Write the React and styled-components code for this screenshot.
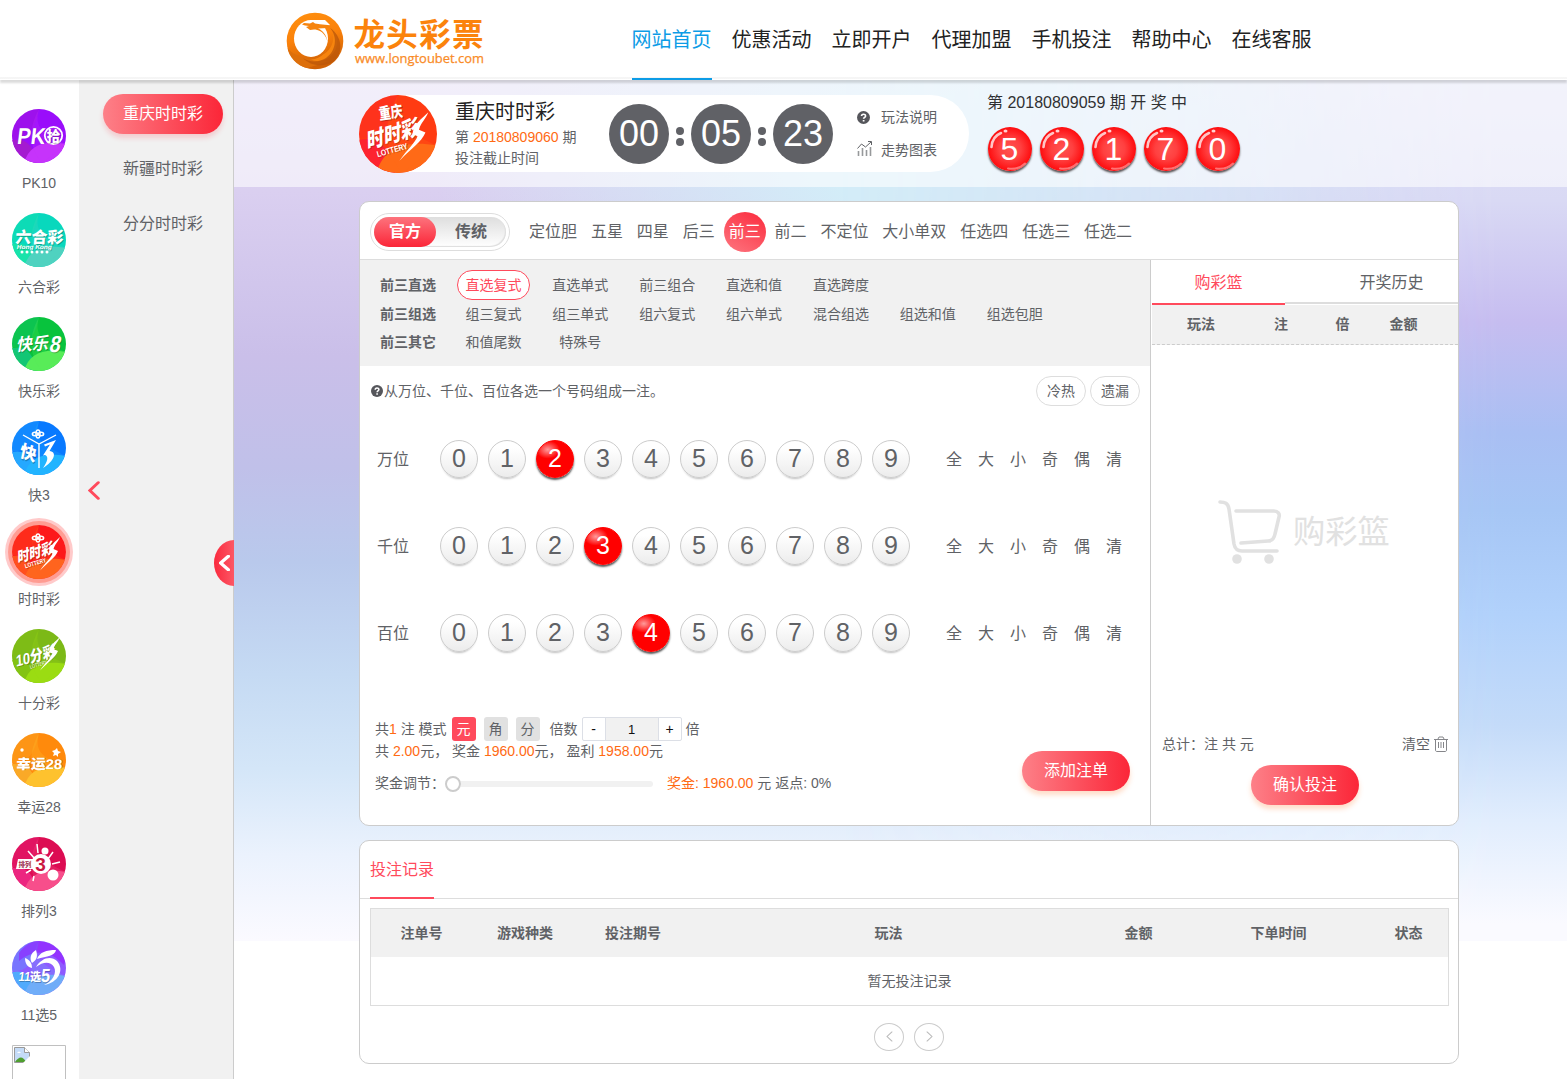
import React from "react";
import styled, { createGlobalStyle, css } from "styled-components";

const Global = createGlobalStyle`
  *, *::before, *::after { box-sizing: border-box; }
  html, body { margin: 0; padding: 0; }
  body {
    height: 1079px;
    overflow: hidden;
    background: #fff;
    color: #606266;
    font: 14px/20px "Liberation Sans", "Noto Sans CJK SC", sans-serif;
  }
  button, input { font: inherit; color: inherit; border: 0; padding: 0; background: none; }
  svg { display: block; flex: none; }
`;

const svgFont = '"Liberation Sans", "Noto Sans CJK SC", sans-serif';

/* ---------- header ---------- */
const Header = styled.header`
  position: relative;
  z-index: 5;
  height: 80px;
  padding-left: 286px;
  display: flex;
  background: linear-gradient(#fff 77px, #ececec 78px, #fff 79px);
  box-shadow: 0 3px 2px rgba(0, 0, 0, 0.14);
`;
const Nav = styled.nav`
  display: flex;
  gap: 20px;
  margin-left: 145.5px;
  height: 80px;
`;
const NavLink = styled.a`
  height: 80px;
  font-size: 20px;
  line-height: 81px;
  color: ${(p) => (p.$on ? "#0d9ce6" : "#222")};
  border-bottom: 2px solid ${(p) => (p.$on ? "#0d9ce6" : "transparent")};
`;

/* ---------- page frame ---------- */
const Frame = styled.div`
  display: flex;
  height: 999px;
  overflow: hidden;
`;
const Rail = styled.aside`
  width: 79px;
  flex: none;
  padding-top: 29px;
  display: flex;
  flex-direction: column;
  background: #fff;
`;
const RailItem = styled.div`
  width: 78px;
  height: 104px;
  flex: none;
  display: flex;
  flex-direction: column;
  align-items: center;
  gap: 10px;
`;
const RailIcon = styled.div`
  width: 54px;
  height: 54px;
  border-radius: 50%;
  ${(p) => p.$on && css`box-shadow: 0 0 0 4px #ff9c92, 0 0 0 7px #ffcaca;`}
`;
const SubMenu = styled.aside`
  position: relative;
  width: 155px;
  flex: none;
  padding: 14px 10px 0 24px;
  display: flex;
  flex-direction: column;
  gap: 15px;
  background: #f1f1f1;
  border-right: 1px solid #ccc;
`;
const SubItem = styled.a`
  width: 120px;
  height: 40px;
  border-radius: 20px;
  text-align: center;
  font-size: 16px;
  line-height: 39px;
  ${(p) =>
    p.$on &&
    css`
      color: #fff;
      background: linear-gradient(90deg, #fd8088, #fb2638);
      box-shadow: 0 4px 5px rgba(251, 60, 75, 0.2);
    `}
`;
const BackArrow = styled.div`
  position: absolute;
  left: 9px;
  top: 401px;
`;
const FoldTab = styled.div`
  position: absolute;
  right: -1px;
  top: 460px;
  width: 20px;
  height: 46px;
  border-radius: 20px 0 0 20px / 23px 0 0 23px;
  background: linear-gradient(90deg, #fa2a3e, #fc5765);
  display: flex;
  align-items: center;
  justify-content: flex-end;
  padding-right: 4px;
`;

const Main = styled.main`
  position: relative;
  isolation: isolate;
  width: 1333px;
  height: 999px;
  &::before, &::after {
    content: "";
    position: absolute;
    z-index: -1;
    left: 0;
    right: 0;
    top: 0;
    height: 861px;
  }
  &::before {
    background:
      radial-gradient(ellipse 620px 240px at 820px 90px, #d3edf8 0 35%, rgba(211, 237, 248, 0)),
      linear-gradient(180deg, #dfd8f3 0, #dacff0 13%, #cabfe9 32%, #c0c0e9 45%, #b9c9ec 56%, #c5daf3 69%, #d4e6f8 80%, #ebf2fd 90%, #fbfaff 100%);
  }
  &::after {
    background: linear-gradient(180deg, #e1e2f6 0, #d9d9f4 14%, #c6bdf0 28%, #a9bff3 41%, #a6c6f5 50%, #b1d1fb 62%, #c4dbf9 75%, #e1edfd 86%, #fafaff 98%);
    mask-image: linear-gradient(90deg, transparent 45%, #000 95%);
  }
`;
const InfoBar = styled.section`
  height: 107px;
  padding: 15px 0 0 125px;
  display: flex;
  background: rgba(255, 255, 255, 0.58);
`;
const InfoPill = styled.div`
  width: 610px;
  height: 77px;
  border-radius: 39px;
  background: #fff;
  display: flex;
`;
const GameText = styled.div`
  margin-left: 18px;
  width: 154px;
  padding-top: 3px;
`;
const GameName = styled.div`
  margin-bottom: 1px;
  font-size: 20px;
  line-height: 28px;
  color: #222;
`;
const Line = styled.div`
  line-height: 21px;
  white-space: pre;
`;
const Orange = styled.span`
  color: #ff6a13;
`;
const Clock = styled.div`
  display: flex;
  align-items: center;
  height: 78px;
`;
const Digits = styled.div`
  width: 60px;
  height: 60px;
  border-radius: 50%;
  background: #606166;
  color: #fff;
  font-size: 36px;
  line-height: 60px;
  text-align: center;
`;
const Colon = styled.div`
  width: 22px;
  display: flex;
  flex-direction: column;
  align-items: center;
  gap: 3px;
  padding-top: 5px;
  &::before, &::after {
    content: "";
    width: 8px;
    height: 8px;
    border-radius: 50%;
    background: #606166;
  }
`;
const Links = styled.div`
  margin-left: 24px;
  padding-top: 11px;
  display: flex;
  flex-direction: column;
  gap: 11px;
`;
const IconLink = styled.a`
  height: 22px;
  display: flex;
  align-items: center;
  gap: 8px;
`;
const LinkIcon = styled.span`
  width: 16px;
  height: ${(p) => p.$h}px;
`;
const Draw = styled.div`
  margin: -3px 0 0 18px;
`;
const DrawTitle = styled.div`
  font-size: 16px;
  line-height: 22px;
  color: #303133;
`;
const DrawBalls = styled.div`
  display: flex;
  gap: 8px;
  margin: 13px 0 0 1px;
`;
const DrawBall = styled.div`
  position: relative;
  width: 44px;
  height: 44px;
  border-radius: 50%;
  color: #fff;
  font-size: 32px;
  line-height: 44px;
  text-align: center;
  text-indent: -1px;
  background: radial-gradient(circle, #ff5350 0, #ff4040 35%, #fe0d0f 70%);
  box-shadow: 0 2px 2px rgba(40, 30, 30, 0.75);
`;
const Gloss = styled.svg`
  position: absolute;
  inset: 0;
`;

/* ---------- cards ---------- */
const Card = styled.section`
  width: 1100px;
  height: ${(p) => p.$h}px;
  margin: 14px 0 0 125px;
  border: 1px solid #ccc;
  border-radius: 10px;
  background: #fff;
  overflow: hidden;
`;
const TopRow = styled.div`
  height: 58px;
  display: flex;
  align-items: center;
  padding: 2px 0 0 10px;
  border-bottom: 1px solid #ddd;
`;
const Switch = styled.div`
  width: 140px;
  height: 38px;
  padding: 3px;
  border: 1px solid #ddd;
  border-radius: 19px;
`;
const SwitchTrack = styled.div`
  display: flex;
  height: 30px;
  border-radius: 15px;
  background: linear-gradient(#dedede, #fff);
  box-shadow: inset -1px -1px 1px #ddd;
`;
const SwitchOption = styled.button`
  width: ${(p) => (p.$on ? 62 : 70)}px;
  height: 30px;
  border-radius: 15px;
  font-size: 16px;
  font-weight: 700;
  line-height: 28px;
  ${(p) => p.$on && css`color: #fff; background: linear-gradient(#fd737d, #fb2638);`}
`;
const PlayTabs = styled.div`
  display: flex;
  align-items: center;
  gap: 3.9px;
  margin-left: 14px;
`;
const PlayTab = styled.a`
  height: 40px;
  padding: 0 5px;
  font-size: 16px;
  line-height: 39px;
  ${(p) => p.$on && css`color: #fff; border-radius: 50%; background: linear-gradient(30deg, #fd7680, #fb2a3c);`}
`;
const Columns = styled.div`
  display: flex;
  height: 566px;
`;
const BetArea = styled.div`
  width: 791px;
  border-right: 1px solid #ccc;
`;
const Methods = styled.div`
  height: 106px;
  padding: 10px 0 0 20px;
  background: #f1f1f1;
`;
const MethodRow = styled.div`
  display: flex;
  align-items: center;
  height: ${(p) => (p.$first ? 30 : 28)}px;
  gap: 13.9px;
`;
const MethodLabel = styled.b`
  width: 63px;
`;
const Method = styled.a`
  width: 73px;
  height: ${(p) => (p.$on ? 30 : 28)}px;
  line-height: 28px;
  text-align: center;
  ${(p) => p.$on && css`color: #ff4a5c; background: #fff; border: 1px solid #ff4a5c; border-radius: 15px;`}
`;
const HintRow = styled.div`
  display: flex;
  align-items: center;
  height: 50px;
  padding: 0 10px 0 11px;
`;
const HintText = styled.span`
  margin: 0 auto 0 1px;
`;
const RoundButton = styled.button`
  width: 50px;
  height: 30px;
  margin-left: 4px;
  border: 1px solid #ddd;
  border-radius: 15px;
  line-height: 28px;
`;
const NumberRow = styled.div`
  display: flex;
  align-items: center;
  height: 87px;
  padding-left: 17px;
  font-size: 16px;
`;
const RowLabel = styled.span`
  width: 63px;
`;
const Balls = styled.div`
  display: flex;
  gap: 10px;
  padding-bottom: 2px;
`;
const Ball = styled.button`
  width: 38px;
  height: 38px;
  padding-bottom: 2px;
  border-radius: 50%;
  border: 1px solid #ccc;
  background: linear-gradient(#fff 20%, #ececec);
  box-shadow: 0 3px 2px -2px rgba(0, 0, 0, 0.25);
  font-size: 25px;
  line-height: 34px;
  ${(p) =>
    p.$on &&
    css`
      color: #fff;
      border-color: #f00;
      background: radial-gradient(ellipse 12px 9px at 30% 24%, #ff9b9b, #f00);
      box-shadow: 0 2px 2px rgba(0, 0, 0, 0.65);
    `}
`;
const Picks = styled.div`
  display: flex;
  gap: 16px;
  margin-left: 36px;
`;
const BetFooter = styled.div`
  display: flex;
  justify-content: space-between;
  align-items: flex-start;
  padding: 40px 20px 0 15px;
`;
const AddSlot = styled.div`
  padding-top: 34px;
`;
const ModeRow = styled.div`
  display: flex;
  align-items: center;
  height: 24px;
  white-space: pre;
`;
const Units = styled.div`
  display: flex;
  gap: 8px;
  margin: 0 10px 0 5px;
`;
const Unit = styled.button`
  width: 24px;
  height: 24px;
  border-radius: 3px;
  line-height: 24px;
  background: ${(p) => (p.$on ? "#ff4a5c" : "#e1e1e1")};
  color: ${(p) => (p.$on ? "#fff" : "#606266")};
`;
const Stepper = styled.div`
  display: flex;
  width: 100px;
  height: 24px;
  margin: 0 4px;
  border: 1px solid #dcdfe6;
  border-radius: 2px;
  color: #111;
  line-height: 22px;
  text-align: center;
`;
const StepButton = styled.button`
  width: 22px;
  color: #111;
`;
const StepValue = styled.div`
  width: 54px;
  font-size: 13px;
  line-height: 24px;
  background: #f1f1f1;
  border: 1px solid #dcdfe6;
  border-width: 0 1px;
`;
const SliderRow = styled.div`
  display: flex;
  align-items: center;
  margin-top: 11px;
  height: 20px;
  white-space: pre;
`;
const Track = styled.div`
  width: 208px;
  height: 18px;
  margin: 1px 14px 0 0;
  display: flex;
  align-items: center;
  &::before {
    content: "";
    width: 16px;
    height: 16px;
    flex: none;
    border: 2px solid #ccc;
    border-radius: 50%;
  }
  &::after {
    content: "";
    flex: 1;
    height: 6px;
    border-radius: 0 3px 3px 0;
    background: #f1f1f1;
  }
`;
const RedButton = styled.button`
  width: 108px;
  height: 40px;
  border-radius: 20px;
  color: #fff;
  font-size: 16px;
  line-height: 38px;
  background: linear-gradient(90deg, #fd8088, #fb2638);
  box-shadow: 0 4px 5px rgba(255, 120, 40, 0.25);
`;

/* ---------- basket ---------- */
const Basket = styled.div`
  width: 307px;
  display: flex;
  flex-direction: column;
  padding-left: 1px;
`;
const BasketTabs = styled.div`
  display: flex;
  height: 45px;
  font-size: 16px;
  line-height: 45px;
  text-align: center;
`;
const BasketTab = styled.a`
  width: ${(p) => (p.$on ? 133 : 173)}px;
  height: 45px;
  ${(p) => !p.$on && css`padding-left: 40px; height: 44px; border-bottom: 2px solid #ddd;`}
  ${(p) => p.$on && css`color: #ff4a5c; border-bottom: 2px solid #ff4a5c;`}
`;
const BasketHead = styled.div`
  display: grid;
  grid-template-columns: 98px 62px 61px 61px;
  height: 40px;
  background: #f1f1f1;
  border-bottom: 1px dashed #ccc;
  font-weight: 700;
  line-height: 39px;
  text-align: center;
`;
const EmptyBasket = styled.div`
  height: 390px;
  display: flex;
  align-items: center;
  gap: 11px;
  padding: 0 0 17px 66px;
  color: #e1e1e1;
  font-size: 32.3px;
  line-height: 40px;
`;
const TotalRow = styled.div`
  display: flex;
  align-items: center;
  height: 18px;
  padding: 0 10px;
`;
const ClearButton = styled.button`
  display: flex;
  align-items: center;
  gap: 4px;
  margin-left: auto;
`;
const ConfirmRow = styled.div`
  display: flex;
  justify-content: center;
  padding-top: 12px;
`;

/* ---------- records ---------- */
const RecordTitle = styled.div`
  height: 58px;
  padding-left: 10px;
  display: flex;
  border-bottom: 1px solid #ddd;
`;
const RecordTab = styled.a`
  height: 58px;
  font-size: 16px;
  line-height: 57px;
  color: #ff4a5c;
  border-bottom: 2px solid #ff4a5c;
`;
const Table = styled.div`
  width: 1079px;
  height: 98px;
  margin: 9px 0 0 10px;
  border: 1px solid #ddd;
`;
const TableHead = styled.div`
  display: grid;
  grid-template-columns: 101px 106px 110px 401px 99px 181px 79px;
  height: 48px;
  background: #f1f1f1;
  font-weight: 700;
  line-height: 48px;
  text-align: center;
`;
const TableEmpty = styled.div`
  line-height: 48px;
  text-align: center;
`;
const Pager = styled.div`
  display: flex;
  justify-content: center;
  gap: 10px;
  padding-top: 17px;
`;
const PageButton = styled.button`
  width: 30px;
  height: 28px;
  padding-bottom: 2px;
  border: 1px solid #ccc;
  border-radius: 50%;
  display: grid;
  place-items: center;
`;

/* ---------- drawings ---------- */
function Logo() {
  return (
    <svg width="200" height="78" viewBox="0 0 200 78">
      <defs>
        <linearGradient id="ring" x1="0" y1="0" x2="0.25" y2="1">
          <stop offset="0" stopColor="#ff900f" />
          <stop offset="0.5" stopColor="#fb820b" />
          <stop offset="1" stopColor="#cf6106" />
        </linearGradient>
      </defs>
      <circle cx="29" cy="41" r="28.3" fill="url(#ring)" />
      <path d="M1.500 48c1 8 9 18 20 20l22-7-18-2C14 58 5 53 1.500 48Z" fill="#dd6f0b" />
      <ellipse cx="25" cy="38.500" rx="17" ry="18.500" fill="#fff" />
      <path d="M24 20h15l5 5-6 4-14-3Z" fill="#fff" />
      <path d="M16 24.500l2-1.500 6 .5 3-1.500 2 1.500 5 .8 10 1-2 2.700-10 .5c10 4 13 18 5 26 10-5 14-19 6-29l5 4c5 9 4 20-3 26-6 6-14 7-20 4 13-1 20-12 15-22-3-6-8-8-12-8l-4 .5-4-3 3-1-4-.5Z" fill="#f6840e" />
      <path d="M44 28c8 9 6 23-4 30-8 5-17 4-23 0 7 8 22 10 31 3 10-9 8-25-4-33Z" fill="#b9560a" opacity=".75" />
      <text x="67.5" y="46" fontSize="31.500" fontWeight="700" textLength="130" fill="#fb830c" fontFamily={svgFont}>龙头彩票</text>
      <text x="69" y="63" fontSize="13" textLength="129" lengthAdjust="spacingAndGlyphs" fill="#f98b27" stroke="#f98b27" strokeWidth=".25" fontFamily='"Open Sans", sans-serif'>www.longtoubet.com</text>
    </svg>
  );
}

function Word({ children, x = 27, y = 33, size = 16, angle = 0, skew = 0, width, fill = "#fff", weight = 900 }) {
  return (
    <text
      transform={`translate(${x} ${y}) rotate(${angle}) skewX(${skew})`}
      fontSize={size}
      fontWeight={weight}
      fill={fill}
      textAnchor="middle"
      textLength={width}
      lengthAdjust="spacingAndGlyphs"
      fontFamily={svgFont}
      style={{ textShadow: fill === "#fff" ? "1px 1px 0 rgba(0,0,0,.25)" : "none" }}
    >
      {children}
    </text>
  );
}

function Disc({ id, colors, size = 54, children }) {
  const [a, b, c] = colors;
  return (
    <svg width={size} height={size} viewBox="0 0 54 54">
      <defs>
        <clipPath id={`${id}-clip`}><circle cx="27" cy="27" r="27" /></clipPath>
      </defs>
      <g clipPath={`url(#${id}-clip)`}>
        <rect width="54" height="54" fill={a} />
        <path d="M0 30C12 31 22 25 27 0H0Z" fill={b} opacity=".35" />
        <path d="M0 31c14-3 21 5 25 23H0Z" fill={b} />
        <path d="M12 54c5-17 18-23 42-19v19Z" fill={c} />
        <path d="M27 0c-5 19 3 24 27 35L30 54C18 39 15 22 27 0Z" fill={c} opacity=".25" />
      </g>
      {children}
    </svg>
  );
}

function Flower() {
  return (
    <g fill="none" stroke="#fff" strokeWidth="1.6">
      <ellipse cx="26" cy="13" rx="2" ry="4" />
      <ellipse cx="23" cy="13" rx="2.600" ry="1.700" />
      <ellipse cx="29" cy="13" rx="2.600" ry="1.700" />
    </g>
  );
}

const Swoosh = () => (
  <path d="M48 12C46 17 43 19 41.500 24L46 26C43 33 37 36 28 45.500 33 38 39 33 40.500 28.500L37 27C38 20 43 17 48 12Z" fill="#fff" />
);

const games = [
  { name: "PK10", art: (
    <Disc id="pk" colors={["#9a0dfb", "#a41bd0", "#c633fb"]}>
      <Word x={18.5} y={34.5} size={23} width={28} skew={-7}>PK</Word>
      <circle cx="41.5" cy="26.5" r="8.7" fill="#a51af3" stroke="#fff" strokeWidth="1.8" />
      <Word x={41.5} y={31.6} size={13.5}>拾</Word>
    </Disc>
  ) },
  { name: "六合彩", art: (
    <Disc id="lh" colors={["#08d8bd", "#18e3aa", "#4fd2c0"]}>
      <Word x={27} y={30} size={16} width={48} skew={-4}>六合彩</Word>
      <Word x={22} y={36} size={6} width={35} skew={-10}>Hong Kong</Word>
      <path d="M10 39h27" stroke="#fff" strokeWidth="3" strokeLinecap="round" strokeDasharray="0 5" />
    </Disc>
  ) },
  { name: "快乐彩", art: (
    <Disc id="kl" colors={["#08c33d", "#13c675", "#58ec59"]}>
      <Word x={20} y={33} size={17} width={32} angle={-3} skew={-14} weight={700}>快乐</Word>
      <Word x={42} y={35} size={23} width={11} skew={-12} weight={700}>8</Word>
    </Disc>
  ) },
  { name: "快3", art: (
    <Disc id="k3" colors={["#0879ff", "#25a8ff", "#22b4ff"]}>
      <Flower />
      <path d="M11 14l16 9 17-9M27 23v24" stroke="#fff" strokeWidth="1.4" fill="none" />
      <Word x={15} y={38} size={17} angle={20} skew={8}>快</Word>
      <path d="M32 23.500l12-4.500-6.500 11c8 1 5 10-6.500 17 4.500-6.500 6-11.500 2-13l-2 .5 7-11-5 2Z" fill="#fff" />
    </Disc>
  ) },
  { name: "时时彩", on: true, art: (
    <Disc id="ss" colors={["#fd181b", "#ff501d", "#ff651e"]}>
      <Flower />
      <Word x={23.5} y={33} size={15} width={37} angle={-16} skew={-15}>时时彩</Word>
      <Word x={24} y={40} size={6} width={22} angle={-17}>LOTTERY</Word>
      <Swoosh />
    </Disc>
  ) },
  { name: "十分彩", art: (
    <Disc id="sf" colors={["#7cb917", "#83c313", "#9bdc12"]}>
      <Word x={24} y={32.5} size={15.5} width={41} angle={-15} skew={-12}>10分彩</Word>
      <Word x={27} y={37} size={5} width={18} angle={-17} weight={400}>LOTTERY</Word>
      <g transform="translate(0 -4)"><Swoosh /></g>
    </Disc>
  ) },
  { name: "幸运28", art: (
    <Disc id="xy" colors={["#ff8a0c", "#faa927", "#fec22e"]}>
      <Word x={27} y={35.5} size={14} width={46} skew={-3}>幸运28</Word>
      <path d="M45 15l1 3 3 1-3 2v3l-2-2-3 1 1-3-2-2 3-1Z" fill="#fff" />
      <circle cx="10" cy="17" r="1.7" fill="#fff" />
    </Disc>
  ) },
  { name: "排列3", art: (
    <Disc id="pl" colors={["#dc0c52", "#ec2680", "#f74e8b"]}>
      <path d="M25 7l1 9M16 14l7 8M41 15l-5 7M48 25l-8 2M22 39l-1 5M14 36l5-3" stroke="#fff" strokeWidth="1.5" />
      <path d="M6 22h17l-1 10H4Z" fill="#fff" />
      <Word x={13} y={29.6} size={7} width={13} fill="#9a2949" weight={700}>排列</Word>
      <circle cx="29" cy="27" r="10" fill="#fff" />
      <circle cx="33" cy="14" r="3.5" fill="#fff" />
      <circle cx="41" cy="38" r="5.5" fill="#fff" />
      <Word x={28.5} y={33.7} size={19} fill="#ca1741">3</Word>
    </Disc>
  ) },
  { name: "11选5", art: (
    <Disc id="x5" colors={["#8e5aff", "#51aafc", "#70adf8"]}>
      <path d="M7 12C16 0 24 0 27 0 44 2 50 12 53 20l-1 4C37 8 22 8 7 20Z" fill="#970cff" opacity=".5" />
      <path d="M24 26c5-9 15-12 21-6 8 9 1 22-13 24 9-4 13-12 10-18-4-6-11-5-18 0Z" fill="#fff" />
      <path d="M25 18c3-7 9-9 19-9-1 6-9 6-19 9ZM20 22c-3-5-1-10 4-13 2 6 1 10-4 13ZM20 27c-5-1-7-5-7-10 5 2 7 5 7 10Z" fill="#fff" />
      <Word x={12} y={40} size={13} width={12} skew={-8}>11</Word>
      <Word x={23.5} y={40} size={11}>选</Word>
      <Word x={33} y={41} size={19} width={9} skew={-6}>5</Word>
    </Disc>
  ) },
];

function BrokenImage() {
  return (
    <svg width="54" height="54" viewBox="0 0 54 54">
      <path d="M.5 54V.5h53V54" fill="#fff" stroke="#c0c0c0" />
      <path d="M2.5 2.5h10l5 5v10h-15Z" fill="#c4dbf7" stroke="#999" />
      <path d="M12.5 2.5v5h5" fill="#fff" stroke="#999" />
      <path d="M3 17c4-6 8-6 11 0Z" fill="#4f9f2f" />
      <path d="M5 8q2-3 4 0Z" fill="#fff" />
      <path d="M11 18l7-7v7Z" fill="#fff" />
    </svg>
  );
}

function CityLogo() {
  return (
    <Disc id="cq" size={78} colors={["#ff3b12", "#fd2330", "#ff6a17"]}>
      <Word x={22.5} y={16} size={11} angle={-8} width={16.5}>重庆</Word>
      <Word x={23.5} y={32.5} size={15} width={37} angle={-16} skew={-15}>时时彩</Word>
      <Word x={23.5} y={40} size={5.8} width={22} angle={-16}>LOTTERY</Word>
      <Swoosh />
    </Disc>
  );
}

const Help = ({ size = 12 }) => (
  <svg width={size} height={size} viewBox="0 0 12 12">
    <circle cx="6" cy="6" r="6" fill="#55565b" />
    <path d="M4.2 4.7C4.2 2.4 7.9 2.4 7.9 4.5c0 1.4-1.8 1.4-1.8 2.7" fill="none" stroke="#fff" strokeWidth="1.5" />
    <path d="M5.3 8.3h1.6v1.4H5.3Z" fill="#fff" />
  </svg>
);
const Trend = () => (
  <svg width="16" height="16" viewBox="0 0 16 16" fill="none" stroke="#606266">
    <path d="M.5 7.5l4-4.5 4 3L14 1M11 .5h3.500V4" />
    <path d="M1.5 15v-5M5.5 15V7M9.5 15V9M13.5 15V6" strokeWidth="1.6" opacity=".65" />
  </svg>
);
const Cart = () => (
  <svg width="64" height="66" viewBox="0 0 64 66" fill="none" stroke="#e1e1e1" strokeWidth="3.6" strokeLinecap="round" strokeLinejoin="round">
    <path d="M2 3c5 0 8 1 9 7l5 35c1 5 3 7 8 7h35M18 12h38c4 0 6 3 5 6l-4 17c-1 5-3 7-7 7l-27 2" />
    <circle cx="19" cy="60" r="4.8" fill="#e1e1e1" stroke="none" />
    <circle cx="51" cy="60" r="4.8" fill="#e1e1e1" stroke="none" />
  </svg>
);
const Trash = () => (
  <svg width="14" height="16" viewBox="0 0 14 16" fill="none" stroke="#85868a">
    <path d="M0 3.5h14M4 3l1-2h4l1 2M1.5 4v10c0 1 .5 1.5 1.5 1.5h8c1 0 1.5-.5 1.5-1.5V4M4.5 6v6M7 6v6M9.5 6v6" />
  </svg>
);
const Chevron = ({ w, h, color, stroke, flip }) => (
  <svg width={w} height={h} viewBox="0 0 10 18" preserveAspectRatio="none" fill="none" stroke={color} strokeWidth={stroke} strokeLinecap="round">
    <path d={flip ? "M1.5 1.5L8.5 9l-7 7.5" : "M8.5 1.5L1.5 9l7 7.5"} />
  </svg>
);

const navItems = ["网站首页", "优惠活动", "立即开户", "代理加盟", "手机投注", "帮助中心", "在线客服"];
const playTabs = ["定位胆", "五星", "四星", "后三", "前三", "前二", "不定位", "大小单双", "任选四", "任选三", "任选二"];
const methods = [
  ["前三直选", ["直选复式", "直选单式", "前三组合", "直选和值", "直选跨度"]],
  ["前三组选", ["组三复式", "组三单式", "组六复式", "组六单式", "混合组选", "组选和值", "组选包胆"]],
  ["前三其它", ["和值尾数", "特殊号"]],
];
const numberRows = [["万位", 2], ["千位", 3], ["百位", 4]];
const picks = ["全", "大", "小", "奇", "偶", "清"];
const digits = [0, 1, 2, 3, 4, 5, 6, 7, 8, 9];

export default function App() {
  return (
    <>
      <Global />
      <Header>
        <Logo />
        <Nav>
          {navItems.map((n, i) => <NavLink key={n} $on={i === 0}>{n}</NavLink>)}
        </Nav>
      </Header>
      <Frame>
        <Rail>
          {games.map((g) => (
            <RailItem key={g.name}>
              <RailIcon $on={g.on}>{g.art}</RailIcon>
              {g.name}
            </RailItem>
          ))}
          <RailItem><BrokenImage /></RailItem>
        </Rail>
        <SubMenu>
          <SubItem $on>重庆时时彩</SubItem>
          <SubItem>新疆时时彩</SubItem>
          <SubItem>分分时时彩</SubItem>
          <BackArrow><Chevron w={12} h={19} color="#ff4a5c" stroke={2.6} /></BackArrow>
          <FoldTab><Chevron w={11} h={16} color="#fff" stroke={3.4} /></FoldTab>
        </SubMenu>
        <Main>
          <InfoBar>
            <InfoPill>
              <CityLogo />
              <GameText>
                <GameName>重庆时时彩</GameName>
                <Line>第 <Orange>20180809060</Orange> 期</Line>
                <Line>投注截止时间</Line>
              </GameText>
              <Clock>
                <Digits>00</Digits><Colon /><Digits>05</Digits><Colon /><Digits>23</Digits>
              </Clock>
              <Links>
                <IconLink><LinkIcon $h={13}><Help size={13} /></LinkIcon>玩法说明</IconLink>
                <IconLink><LinkIcon $h={19}><Trend /></LinkIcon>走势图表</IconLink>
              </Links>
            </InfoPill>
            <Draw>
              <DrawTitle>第 20180809059 期 开 奖 中</DrawTitle>
              <DrawBalls>
                {[5, 2, 1, 7, 0].map((n) => (
                  <DrawBall key={n}>
                    <Gloss width="44" height="44" viewBox="0 0 44 44" fill="none" stroke="#fff" strokeLinecap="round">
                      <path d="M3.500 20C4 13 8 8 13 6" strokeWidth="2.6" opacity=".75" />
                      <ellipse cx="17.5" cy="4" rx="2" ry="1.5" fill="#fff" stroke="none" opacity=".8" />
                      <path d="M20 41.5c7 1 13-1 17-5" strokeWidth="2" opacity=".4" />
                    </Gloss>
                    {n}
                  </DrawBall>
                ))}
              </DrawBalls>
            </Draw>
          </InfoBar>

          <Card $h={625}>
            <TopRow>
              <Switch>
                <SwitchTrack>
                  <SwitchOption $on>官方</SwitchOption>
                  <SwitchOption>传统</SwitchOption>
                </SwitchTrack>
              </Switch>
              <PlayTabs>
                {playTabs.map((t) => <PlayTab key={t} $on={t === "前三"}>{t}</PlayTab>)}
              </PlayTabs>
            </TopRow>
            <Columns>
              <BetArea>
                <Methods>
                  {methods.map(([label, items], r) => (
                    <MethodRow key={label} $first={r === 0}>
                      <MethodLabel>{label}</MethodLabel>
                      {items.map((m, i) => <Method key={m} $on={r === 0 && i === 0}>{m}</Method>)}
                    </MethodRow>
                  ))}
                </Methods>
                <HintRow>
                  <Help />
                  <HintText>从万位、千位、百位各选一个号码组成一注。</HintText>
                  <RoundButton>冷热</RoundButton>
                  <RoundButton>遗漏</RoundButton>
                </HintRow>
                {numberRows.map(([label, picked]) => (
                  <NumberRow key={label}>
                    <RowLabel>{label}</RowLabel>
                    <Balls>{digits.map((d) => <Ball key={d} $on={d === picked}>{d}</Ball>)}</Balls>
                    <Picks>{picks.map((p) => <span key={p}>{p}</span>)}</Picks>
                  </NumberRow>
                ))}
                <BetFooter>
                  <div>
                    <ModeRow>
                      共<Orange>1</Orange> 注 模式
                      <Units>
                        <Unit $on>元</Unit><Unit>角</Unit><Unit>分</Unit>
                      </Units>
                      倍数
                      <Stepper>
                        <StepButton>-</StepButton><StepValue>1</StepValue><StepButton>+</StepButton>
                      </Stepper>
                      倍
                    </ModeRow>
                    <Line>共 <Orange>2.00</Orange>元， 奖金 <Orange>1960.00</Orange>元， 盈利 <Orange>1958.00</Orange>元</Line>
                    <SliderRow>
                      奖金调节：<Track />
                      <Orange>奖金: 1960.00</Orange> 元 返点: 0%
                    </SliderRow>
                  </div>
                  <AddSlot><RedButton>添加注单</RedButton></AddSlot>
                </BetFooter>
              </BetArea>
              <Basket>
                <BasketTabs>
                  <BasketTab $on>购彩篮</BasketTab>
                  <BasketTab>开奖历史</BasketTab>
                </BasketTabs>
                <BasketHead><span>玩法</span><span>注</span><span>倍</span><span>金额</span></BasketHead>
                <EmptyBasket><Cart />购彩篮</EmptyBasket>
                <TotalRow>
                  总计：注 共 元
                  <ClearButton>清空 <Trash /></ClearButton>
                </TotalRow>
                <ConfirmRow><RedButton>确认投注</RedButton></ConfirmRow>
              </Basket>
            </Columns>
          </Card>

          <Card $h={224}>
            <RecordTitle><RecordTab>投注记录</RecordTab></RecordTitle>
            <Table>
              <TableHead>
                {["注单号", "游戏种类", "投注期号", "玩法", "金额", "下单时间", "状态"].map((h) => <span key={h}>{h}</span>)}
              </TableHead>
              <TableEmpty>暂无投注记录</TableEmpty>
            </Table>
            <Pager>
              <PageButton><Chevron w={7} h={11} color="#bbb" stroke={1.6} /></PageButton>
              <PageButton><Chevron w={7} h={11} color="#bbb" stroke={1.6} flip /></PageButton>
            </Pager>
          </Card>
        </Main>
      </Frame>
    </>
  );
}
